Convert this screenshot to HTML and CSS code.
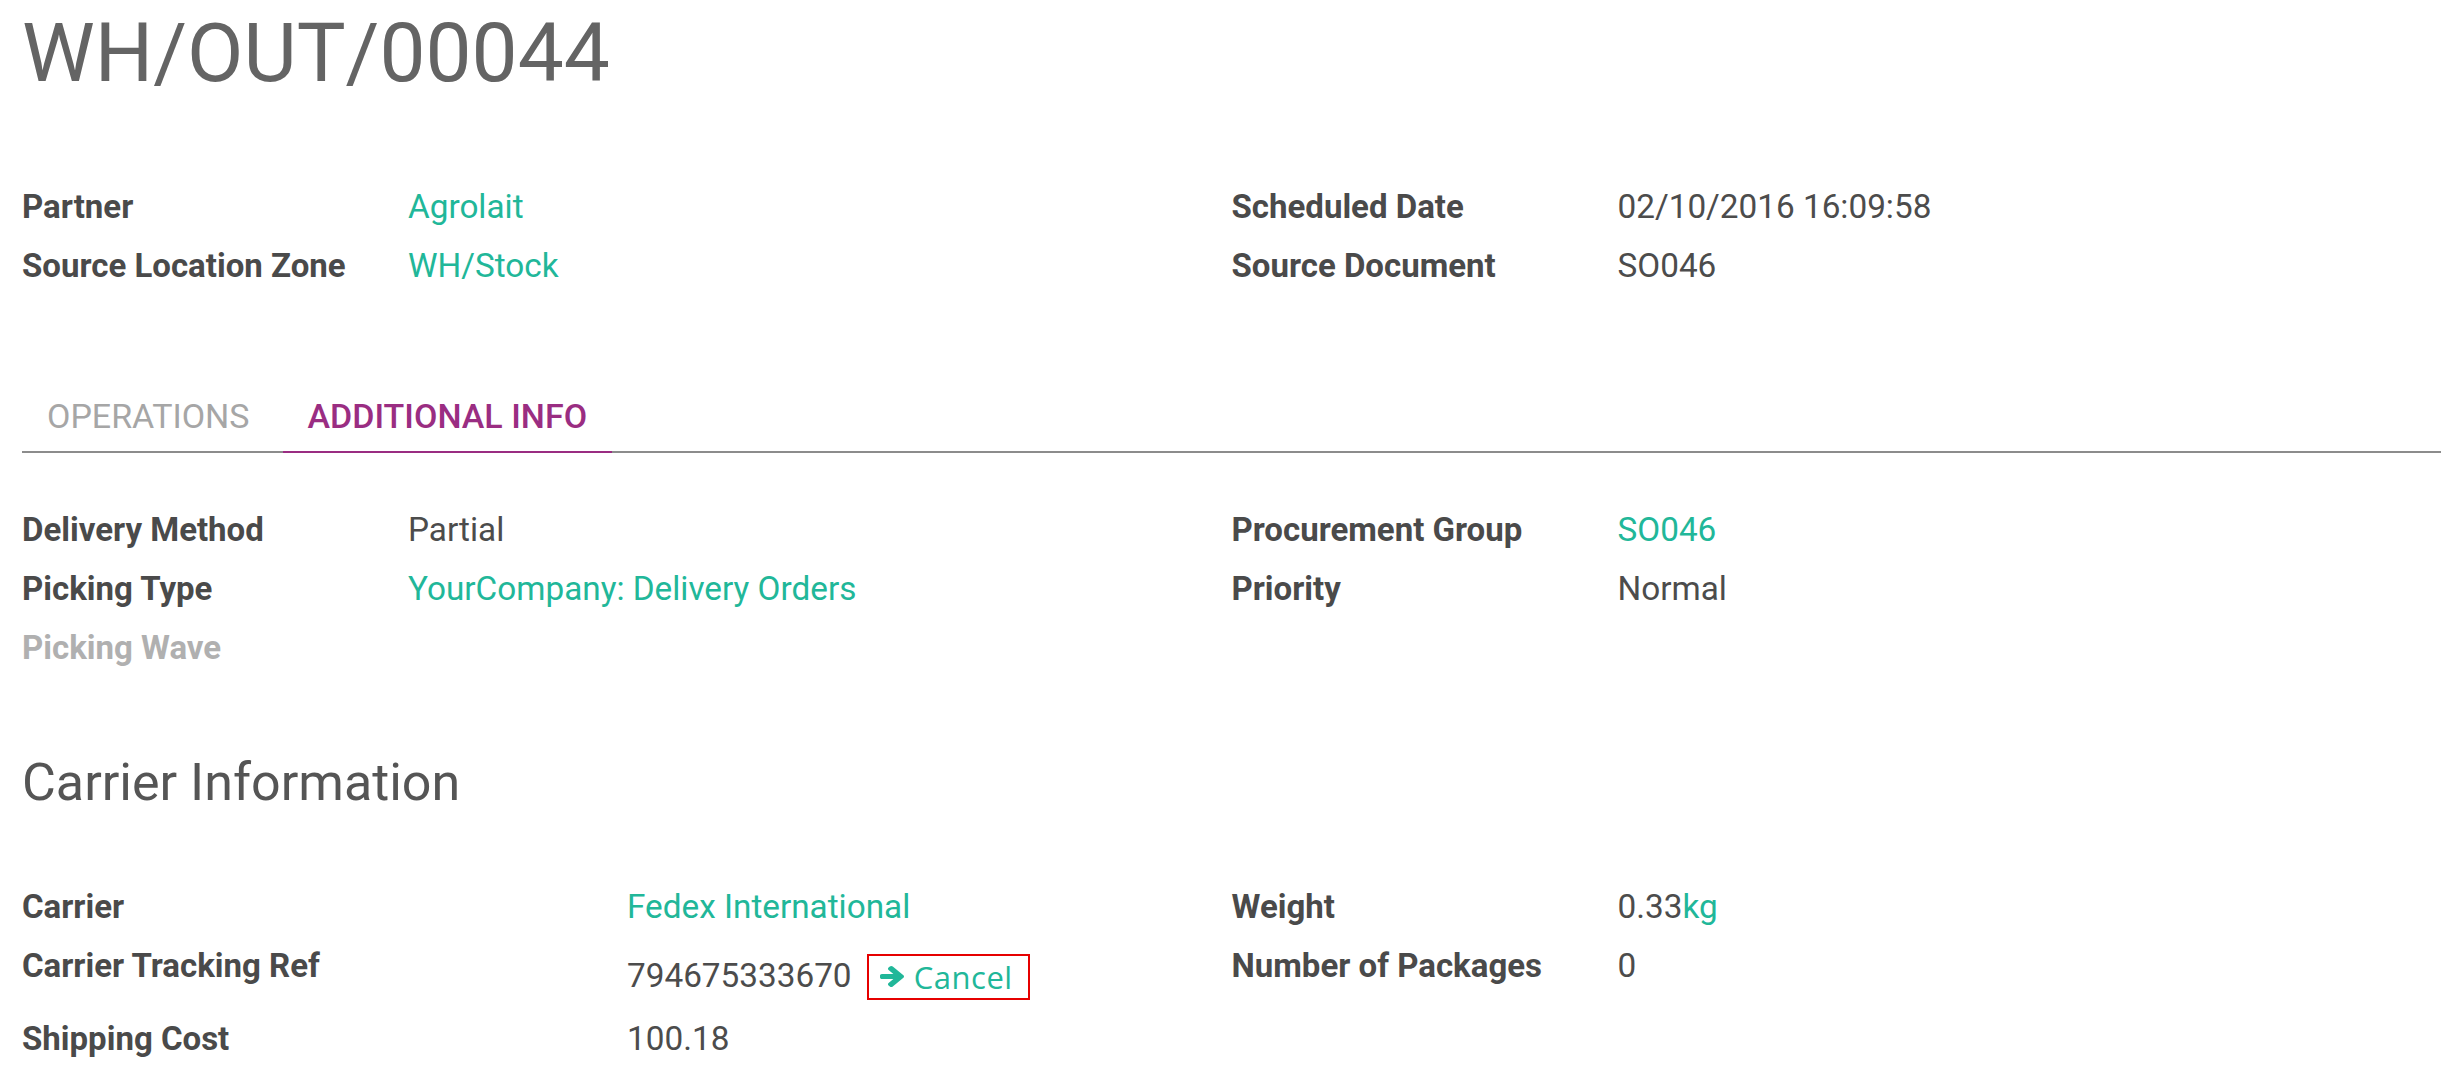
FILE: index.html
```html
<!DOCTYPE html>
<html>
<head>
<meta charset="utf-8">
<title>WH/OUT/00044</title>
<link rel="stylesheet" href="styles.css">
</head>
<body>
<div class="sheet">
  <h1 class="title">WH/OUT/00044</h1>

  <div class="group group-top">
    <div class="fields">
      <div class="label">Partner</div><div class="value"><a class="link">Agrolait</a></div>
      <div class="label">Source Location Zone</div><div class="value"><a class="link">WH/Stock</a></div>
    </div>
    <div class="fields">
      <div class="label">Scheduled Date</div><div class="value">02/10/2016 16:09:58</div>
      <div class="label">Source Document</div><div class="value">SO046</div>
    </div>
  </div>

  <ul class="tabs">
    <li class="tab">OPERATIONS</li>
    <li class="tab active">ADDITIONAL INFO</li>
  </ul>

  <div class="group group-info">
    <div class="fields">
      <div class="label">Delivery Method</div><div class="value">Partial</div>
      <div class="label">Picking Type</div><div class="value"><a class="link">YourCompany: Delivery Orders</a></div>
      <div class="label empty">Picking Wave</div><div class="value"></div>
    </div>
    <div class="fields">
      <div class="label">Procurement Group</div><div class="value"><a class="link">SO046</a></div>
      <div class="label">Priority</div><div class="value">Normal</div>
    </div>
  </div>

  <h2 class="section">Carrier Information</h2>

  <div class="group group-carrier">
    <div class="fields wide">
      <div class="label">Carrier</div><div class="value"><a class="link">Fedex International</a></div>
      <div class="label">Carrier Tracking Ref</div>
      <div class="value tracking">794675333670 <button class="cancel-btn"><svg class="arrow" viewBox="128 181 1472 1558" preserveAspectRatio="none" width="24" height="21"><path d="M1600 960q0 54-37 91l-651 651q-39 37-91 37-51 0-90-37l-75-75q-38-38-38-91t38-91l293-293h-704q-52 0-84.5-37.5t-32.5-90.5v-128q0-53 32.5-90.5t84.5-37.5h704l-293-294q-38-36-38-90t38-90l75-75q38-38 90-38 53 0 91 38l651 651q37 35 37 90z"/></svg>Cancel</button></div>
      <div class="label">Shipping Cost</div><div class="value">100.18</div>
    </div>
    <div class="fields">
      <div class="label">Weight</div><div class="value">0.33<a class="link">kg</a></div>
      <div class="label">Number of Packages</div><div class="value">0</div>
    </div>
  </div>
</div>
</body>
</html>
```

FILE: styles.css
```css
html, body {
  margin: 0;
  padding: 0;
  background: #ffffff;
}

body {
  font-family: Roboto, "Liberation Sans", sans-serif;
  color: #4c4c4c;
  font-size: 33px;
}

.sheet {
  padding: 12px 11px 0 22px;
}

.title {
  margin: 0;
  font-size: 82px;
  line-height: 83px;
  font-weight: 400;
  color: #646464;
}

.group {
  display: grid;
  grid-template-columns: 1fr 1fr;
}

.group-top {
  margin-top: 82px;
}

.fields {
  display: grid;
  grid-template-columns: 386px 1fr;
  grid-auto-rows: 59px;
  align-content: start;
  line-height: 59px;
}

.fields.wide {
  grid-template-columns: 605px 1fr;
}

.label {
  font-weight: 700;
  color: #4a4a4a;
  white-space: nowrap;
}

.label.empty {
  color: #b0b0b0;
}

.value {
  white-space: nowrap;
  color: #4c4c4c;
  font-size: 33.3px;
}

.link {
  color: #21b799;
  text-decoration: none;
}

.tabs {
  list-style: none;
  margin: 86px 0 0 0;
  padding: 0;
  display: flex;
  border-bottom: 2px solid #8c8c8c;
}

.tab {
  padding: 10px 25px;
  line-height: 50px;
  font-size: 34px;
  color: #a6a6a6;
  margin-right: 8px;
  margin-bottom: -2px;
  border-bottom: 2px solid transparent;
}

.tab.active {
  color: #9a2d82;
  font-weight: 500;
  border-bottom-color: #9a2d82;
}

.group-info {
  margin-top: 47px;
}

.section {
  margin: 77px 0 0 0;
  font-size: 52px;
  line-height: 58px;
  font-weight: 400;
  color: #555555;
}

.group-carrier {
  margin-top: 65px;
}

.group-carrier .fields.wide {
  grid-template-rows: 59px 73px 59px;
}

.tracking {
  padding-top: 10px;
}

.cancel-btn {
  display: inline-flex;
  align-items: center;
  box-sizing: border-box;
  height: 46px;
  margin-left: 7px;
  padding: 0 15px 0 11px;
  border: 2px solid #e60000;
  border-radius: 0;
  background: transparent;
  font-family: "Open Sans", "DejaVu Sans", sans-serif;
  font-size: 31px;
  letter-spacing: 0.5px;
  line-height: 46px;
  color: #21b799;
  vertical-align: baseline;
  cursor: pointer;
}

.arrow {
  fill: #21b799;
  margin-right: 10px;
  flex: none;
}
```
